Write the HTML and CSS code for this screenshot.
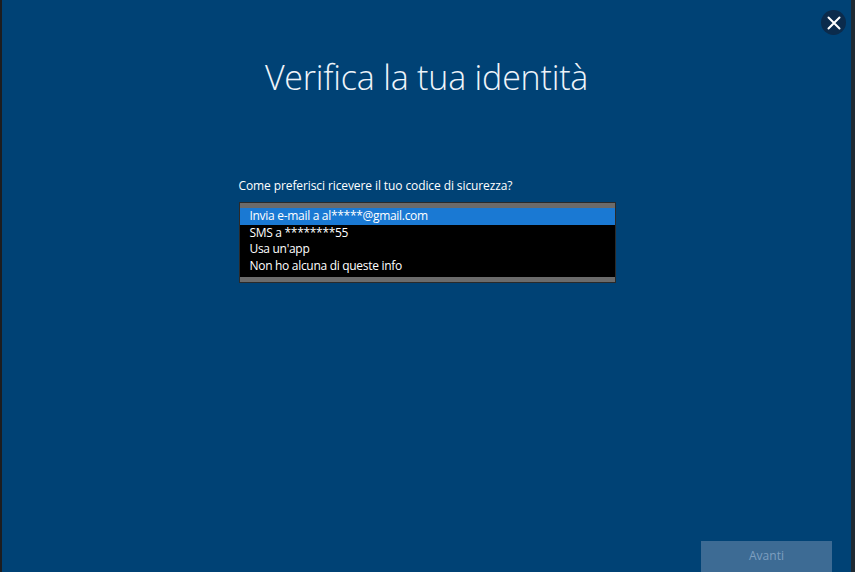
FILE: index.html
```html
<!DOCTYPE html>
<html lang="it">
<head>
  <meta charset="UTF-8">
  <title>Verifica la tua identità</title>
  <link rel="stylesheet" href="styles.css">
</head>
<body>
<div class="frame">
  <div class="window">
    <div class="close-btn">
      <svg width="14" height="14" viewBox="0 0 14 14"><path d="M1.5 1.5L12.5 12.5M12.5 1.5L1.5 12.5" stroke="#fff" stroke-width="2" stroke-linecap="round"/></svg>
    </div>

    <h1 class="title">Verifica la tua identità</h1>

    <div class="choice">
      <div class="choice-label">Come preferisci ricevere il tuo codice di sicurezza?</div>
      <div class="listbox">
        <div class="list-item selected">Invia e-mail a al*****@gmail.com</div>
        <div class="list-item">SMS a ********55</div>
        <div class="list-item">Usa un'app</div>
        <div class="list-item">Non ho alcuna di queste info</div>
      </div>
    </div>

    <div class="footer">
      <button class="next-btn" disabled>Avanti</button>
    </div>
  </div>
  <div class="edge"></div>
</div>
</body>
</html>
```

FILE: styles.css
```css
* {
  margin: 0;
  padding: 0;
  box-sizing: border-box;
  font-family: "Open Sans", "Noto Sans", sans-serif;
}

body {
  width: 855px;
  height: 572px;
  overflow: hidden;
  background-color: #1d1d1f;
}

.frame {
  display: flex;
  height: 572px;
}

.window {
  position: relative;
  width: 849px;
  height: 572px;
  margin-left: 2px;
  background-color: #004275;
  display: flex;
  flex-direction: column;
  align-items: center;
}

.edge {
  width: 4px;
  background-color: #1f2a33;
}

.close-btn {
  position: absolute;
  top: 10px;
  right: 5px;
  width: 25px;
  height: 25px;
  border-radius: 50%;
  background-color: #0b2b4c;
  display: flex;
  justify-content: center;
  align-items: center;
}

.title {
  margin-top: 54px;
  font-size: 34px;
  font-weight: 300;
  color: #eef4fa;
  letter-spacing: -0.2px;
}

.choice {
  width: 377px;
  margin-top: 77px;
  margin-left: 1px;
}

.choice-label {
  font-size: 12px;
  color: #ffffff;
  letter-spacing: -0.1px;
  margin-bottom: 8px;
}

.listbox {
  background-color: #000;
  border: 1px solid #2a2a2a;
  padding: 5px 0;
  box-shadow: inset 0 5px 0 #6b6b6b, inset 0 -5px 0 #6b6b6b;
  height: 81px;
}

.list-item {
  font-size: 12px;
  color: #ffffff;
  letter-spacing: -0.3px;
  height: 16.6px;
  line-height: 16.6px;
  padding-left: 10px;
}

.list-item.selected {
  background-color: #1a79d3;
}

.footer {
  margin-top: auto;
  align-self: flex-end;
  margin-right: 19px;
}

.next-btn {
  width: 131px;
  height: 31px;
  border: none;
  background-color: #3d6b94;
  color: #7d9fc0;
  font-size: 12px;
  padding-bottom: 2px;
}
```
